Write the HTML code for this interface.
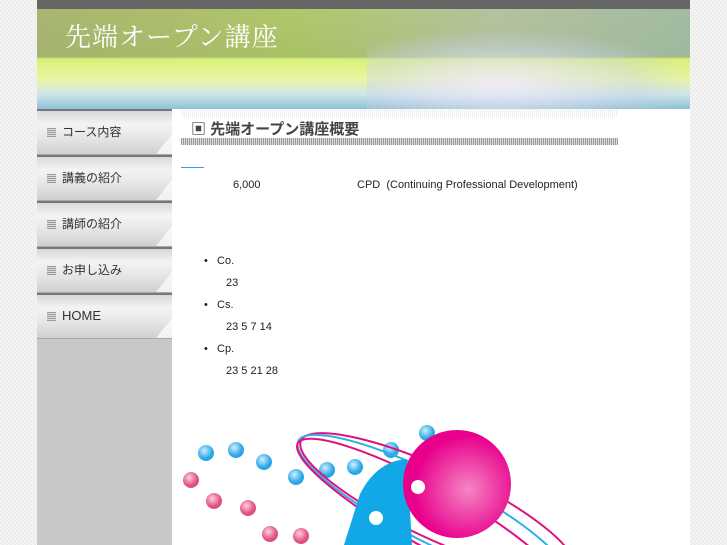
<!DOCTYPE html>
<html><head><meta charset="utf-8"><style>
body{margin:0;width:727px;height:545px;overflow:hidden;background:#f4f4f4;background-image:linear-gradient(45deg,#ececec 25%,transparent 25%,transparent 75%,#ececec 75%),linear-gradient(45deg,#ececec 25%,transparent 25%,transparent 75%,#ececec 75%);background-size:4px 4px;background-position:0 0,2px 2px;font-family:"Liberation Sans","Noto Sans CJK JP",sans-serif;position:relative}
#wrap{position:absolute;left:37px;top:0;width:653px;height:545px;background:#fff;overflow:hidden}
#top{height:9px;background:#666}
#ban{position:relative;height:100px;background:linear-gradient(180deg,#b5c775 0%,#a9bf6e 48%,#d8f07a 50%,#e9f6a0 70%,#cfe6e8 85%,#8fc0d8 100%);overflow:hidden}
#ban .g{position:absolute;left:0;top:0;width:653px;height:48px;background:linear-gradient(90deg,rgba(160,170,110,.6),rgba(170,200,80,.3) 40%,rgba(180,190,200,.5) 70%,rgba(150,180,190,.6))}
#ban .m{position:absolute;left:330px;top:20px;width:330px;height:90px;background:radial-gradient(ellipse at 40% 60%,rgba(240,235,250,.9),rgba(200,210,230,.4) 50%,transparent 70%)}
#ban h1{position:absolute;left:28px;top:8px;margin:0;font:normal 26px "Noto Serif CJK SC",serif;color:#fff;letter-spacing:1px}
#nav{position:absolute;left:0;top:109px;width:135px;height:436px;background:#c8c8c8}
.it{height:43px;border-top:2px solid #777;border-bottom:1px solid #aaa;background:linear-gradient(180deg,#d8d8d8,#f4f4f4 30%,#e2e2e2 70%,#cfcfcf);font-size:12px;color:#333;line-height:42px;padding-left:10px;position:relative}
.it:before{content:"";display:inline-block;width:9px;height:9px;background:repeating-linear-gradient(0deg,#999 0 1px,#ddd 1px 2px);margin-right:6px;vertical-align:-1px}
.it:after{content:"";position:absolute;right:0;bottom:0;border-left:16px solid transparent;border-bottom:20px solid #fff;opacity:.7}
#c{position:absolute;left:135px;top:109px;width:518px;height:436px;overflow:hidden}
.ttl{position:absolute;left:9px;top:0;width:437px;height:36px;background:repeating-linear-gradient(90deg,#fff 0 1px,#eee 1px 2px) top/100% 8px no-repeat}
.ttl span{position:absolute;left:10px;top:9px;font-size:15px;font-weight:bold;color:#444}
.ttl i{position:absolute;left:0;bottom:0;width:437px;height:7px;background:repeating-linear-gradient(90deg,#999 0 1px,#ddd 1px 2px)}
.t{position:absolute;font-size:11px;color:#222}
</style></head><body>
<div id="wrap">
<div id="top"></div>
<div id="ban"><div class="g"></div><div class="m"></div><h1>先端オープン講座</h1></div>
<div id="nav">
<div class="it">コース内容</div><div class="it">講義の紹介</div><div class="it">講師の紹介</div><div class="it">お申し込み</div><div class="it" style="font-size:13px">HOME</div>
</div>
<div id="c">
<div class="ttl"><span>▣ 先端オープン講座概要</span><i></i></div>
<div style="position:absolute;left:9px;top:58px;width:23px;height:1px;background:#39f"></div>
<div class="t" style="left:61px;top:70px">6,000</div>
<div class="t" style="left:185px;top:70px">CPD &nbsp;(Continuing Professional Development)</div>
<div class="t" style="left:32px;top:146px">•&nbsp;&nbsp; Co.</div>
<div class="t" style="left:54px;top:168px">23</div>
<div class="t" style="left:32px;top:190px">•&nbsp;&nbsp; Cs.</div>
<div class="t" style="left:54px;top:212px">23 5 7 14</div>
<div class="t" style="left:32px;top:234px">•&nbsp;&nbsp; Cp.</div>
<div class="t" style="left:54px;top:256px">23 5 21 28</div>
<svg style="position:absolute;left:0;top:300px" width="518" height="136">
<defs><radialGradient id="b" cx=".4" cy=".35"><stop offset="0" stop-color="#cfefff"/><stop offset="1" stop-color="#2aa6e6"/></radialGradient>
<radialGradient id="p" cx=".4" cy=".35"><stop offset="0" stop-color="#ffd0e0"/><stop offset="1" stop-color="#e0507f"/></radialGradient>
<radialGradient id="m" cx=".6" cy=".55"><stop offset="0" stop-color="#f585c4"/><stop offset="1" stop-color="#e8008c"/></radialGradient></defs>
<g fill="url(#b)"><circle cx="34" cy="44" r="8"/><circle cx="64" cy="41" r="8"/><circle cx="92" cy="53" r="8"/><circle cx="124" cy="68" r="8"/><circle cx="155" cy="61" r="8"/><circle cx="183" cy="58" r="8"/><circle cx="219" cy="41" r="8"/><circle cx="255" cy="24" r="8"/></g>
<g fill="url(#p)"><circle cx="19" cy="71" r="8"/><circle cx="42" cy="92" r="8"/><circle cx="76" cy="99" r="8"/><circle cx="98" cy="125" r="8"/><circle cx="129" cy="127" r="8"/></g>
<g fill="none" stroke-width="2"><ellipse cx="265" cy="95" rx="150" ry="35" transform="rotate(25 265 95)" stroke="#e0107f"/><ellipse cx="260" cy="100" rx="150" ry="33" transform="rotate(27 260 100)" stroke="#30aee6"/><ellipse cx="257" cy="107" rx="150" ry="30" transform="rotate(29 257 107)" stroke="#e0107f"/></g>
<path d="M172 136 L188 85 Q205 52 235 50 L240 136Z" fill="#12a8e8"/>
<circle cx="204" cy="109" r="7" fill="#fff"/>
<circle cx="285" cy="75" r="54" fill="url(#m)"/>
<circle cx="246" cy="78" r="7" fill="#fff"/>
</svg>
</div>
</div>
</body></html>
